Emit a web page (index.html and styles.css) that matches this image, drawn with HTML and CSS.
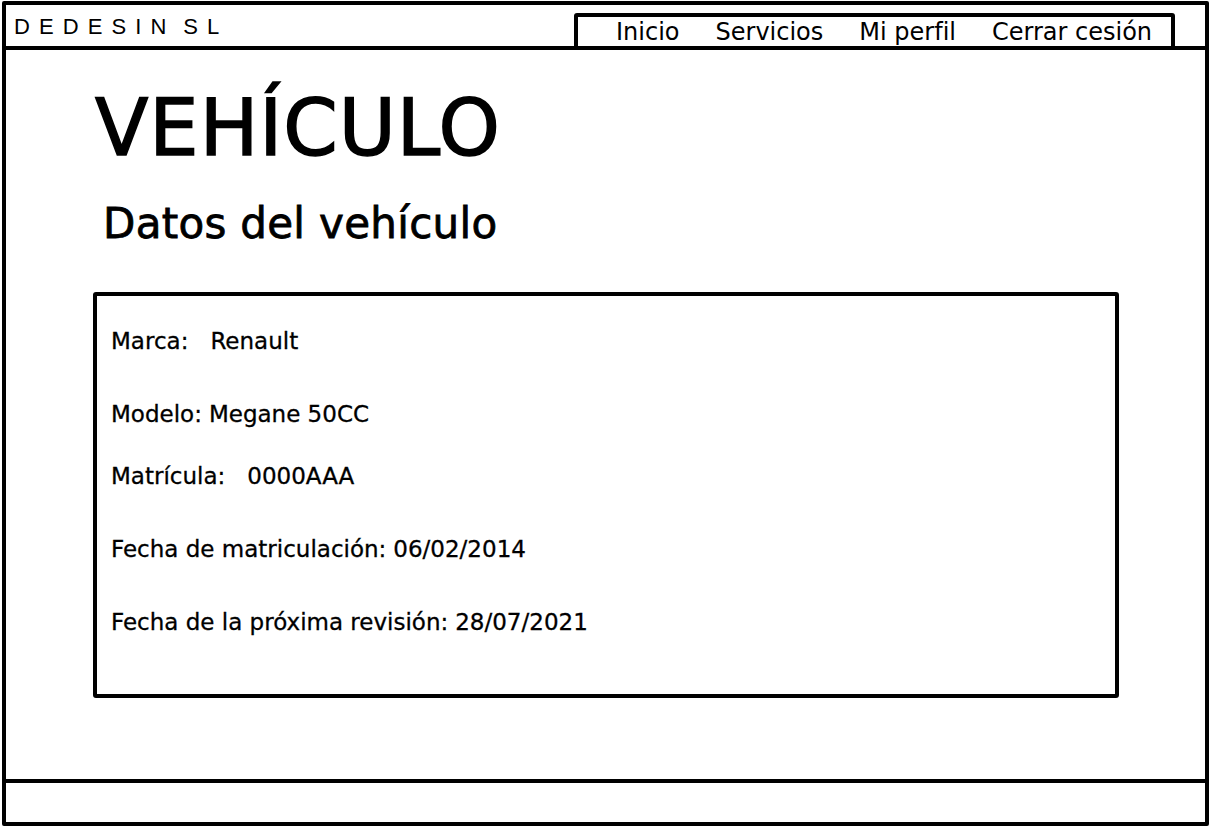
FILE: index.html
```html
<!DOCTYPE html>
<html lang="es">
<head>
    <meta charset="UTF-8">
    <meta name="viewport" content="width=device-width, initial-scale=1.0">
    <title>Vehículo</title>
    <link rel="stylesheet" href="styles.css">
</head>
<body>
    <div class="frame">
        <!-- Header -->
        <header class="header">
            <div class="logo">D E D E S I N &nbsp;S L</div>
            <nav class="nav">
                <a href="#" class="nav-link">Inicio</a>
                <a href="#" class="nav-link">Servicios</a>
                <a href="#" class="nav-link">Mi perfil</a>
                <a href="#" class="nav-link">Cerrar cesión</a>
            </nav>
        </header>

        <!-- Main content -->
        <main class="main">
            <h1 class="title">VEHÍCULO</h1>
            <h2 class="subtitle">Datos del vehículo</h2>

            <div class="card">
                <p class="row"><span class="label wide">Marca:</span>Renault</p>
                <p class="row"><span class="label">Modelo:</span>Megane 50CC</p>
                <p class="row tight"><span class="label wide">Matrícula:</span>0000AAA</p>
                <p class="row"><span class="label">Fecha de matriculación:</span>06/02/2014</p>
                <p class="row"><span class="label">Fecha de la próxima revisión:</span>28/07/2021</p>
            </div>
        </main>

        <!-- Footer -->
        <footer class="footer"></footer>
    </div>
</body>
</html>
```

FILE: styles.css
```css
/* General Styles */
body {
    margin: 0;
    font-family: "DejaVu Sans", "Open Sans", sans-serif;
    color: #000;
    background: #fff;
}

/* Wireframe frame */
.frame {
    height: calc(100vh - 3px);
    margin: 1px 1px 2px 2px;
    border: 4px solid #000;
    border-radius: 2px;
    box-sizing: border-box;
    display: flex;
    flex-direction: column;
}

/* Header */
.header {
    height: 41px;
    border-bottom: 4px solid #000;
    display: flex;
    justify-content: space-between;
    align-items: flex-end;
    flex-shrink: 0;
}

.logo {
    align-self: center;
    padding: 2px 0 0 8px;
    font-family: "Liberation Sans", Arial, sans-serif;
    font-size: 22px;
    letter-spacing: 1.5px;
    white-space: pre;
}

.nav {
    width: 601px;
    height: 37px;
    margin-right: 30px;
    margin-bottom: -4px;
    padding-left: 38px;
    border: 4px solid #000;
    border-radius: 3px;
    box-sizing: border-box;
    display: flex;
    align-items: center;
    gap: 36px;
    background: #fff;
}

.nav-link {
    color: #000;
    text-decoration: none;
    font-size: 24px;
    line-height: 1;
}

/* Main */
.main {
    flex: 1;
    padding-left: 87px;
}

.title {
    margin: 39px 0 0 2px;
    font-size: 78px;
    font-weight: normal;
    line-height: 1;
    letter-spacing: 1px;
    -webkit-text-stroke: 1.5px #000;
}

.subtitle {
    margin: 36px 0 0 10px;
    font-size: 42px;
    font-weight: normal;
    line-height: 1;
    letter-spacing: 0.3px;
    -webkit-text-stroke: 0.8px #000;
}

/* Data card */
.card {
    width: 1026px;
    height: 406px;
    margin-top: 47px;
    padding: 34px 14px 0;
    border: 4px solid #000;
    border-radius: 3px;
    box-sizing: border-box;
}

.row {
    margin: 50px 0 0;
    font-size: 23px;
    line-height: 23px;
    -webkit-text-stroke: 0.3px #000;
}

.row:first-child {
    margin-top: 0;
}

.row.tight {
    margin-top: 39px;
}

.label {
    margin-right: 7px;
}

.label.wide {
    margin-right: 22px;
}

/* Footer */
.footer {
    height: 39px;
    border-top: 4px solid #000;
    flex-shrink: 0;
}
```
